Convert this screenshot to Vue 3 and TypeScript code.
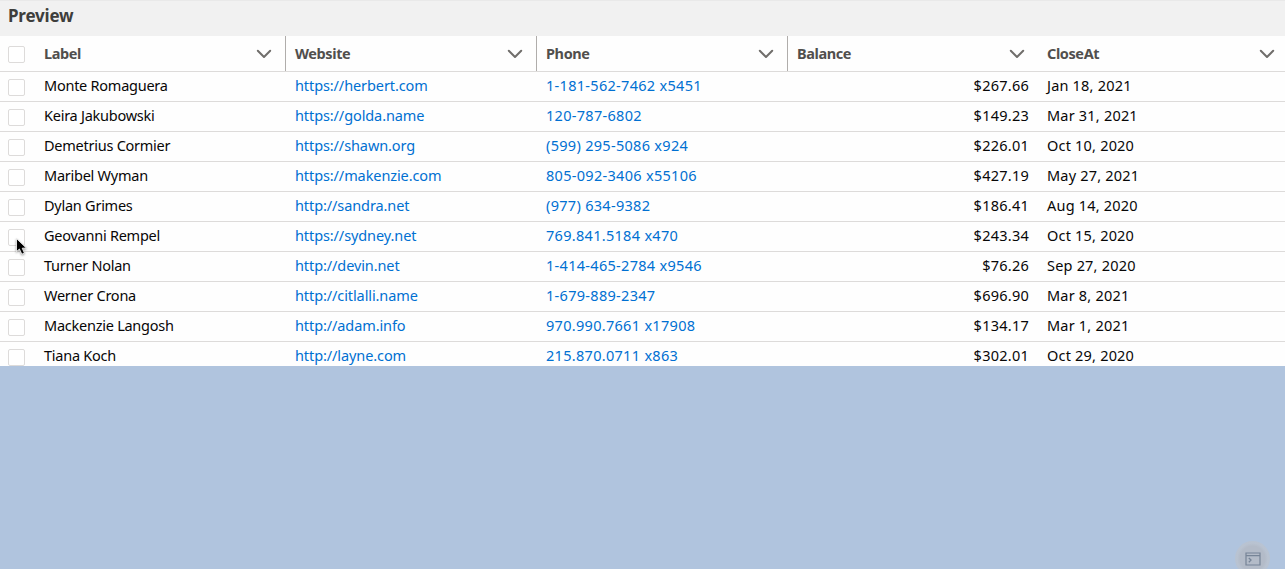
<script setup lang="ts">
interface Row {
  label: string
  website: string
  phone: string
  balance: string
  closeAt: string
}

const columns: string[] = ['Label', 'Website', 'Phone', 'Balance', 'CloseAt']

const rows: Row[] = [
  { label: 'Monte Romaguera', website: 'https://herbert.com', phone: '1-181-562-7462 x5451', balance: '$267.66', closeAt: 'Jan 18, 2021' },
  { label: 'Keira Jakubowski', website: 'https://golda.name', phone: '120-787-6802', balance: '$149.23', closeAt: 'Mar 31, 2021' },
  { label: 'Demetrius Cormier', website: 'https://shawn.org', phone: '(599) 295-5086 x924', balance: '$226.01', closeAt: 'Oct 10, 2020' },
  { label: 'Maribel Wyman', website: 'https://makenzie.com', phone: '805-092-3406 x55106', balance: '$427.19', closeAt: 'May 27, 2021' },
  { label: 'Dylan Grimes', website: 'http://sandra.net', phone: '(977) 634-9382', balance: '$186.41', closeAt: 'Aug 14, 2020' },
  { label: 'Geovanni Rempel', website: 'https://sydney.net', phone: '769.841.5184 x470', balance: '$243.34', closeAt: 'Oct 15, 2020' },
  { label: 'Turner Nolan', website: 'http://devin.net', phone: '1-414-465-2784 x9546', balance: '$76.26', closeAt: 'Sep 27, 2020' },
  { label: 'Werner Crona', website: 'http://citlalli.name', phone: '1-679-889-2347', balance: '$696.90', closeAt: 'Mar 8, 2021' },
  { label: 'Mackenzie Langosh', website: 'http://adam.info', phone: '970.990.7661 x17908', balance: '$134.17', closeAt: 'Mar 1, 2021' },
  { label: 'Tiana Koch', website: 'http://layne.com', phone: '215.870.0711 x863', balance: '$302.01', closeAt: 'Oct 29, 2020' },
]
</script>

<template>
  <div class="page">
    <h1 class="title">Preview</h1>
    <div class="table">
      <div class="row head">
        <div class="check"><span class="box"></span></div>
        <div v-for="(name, i) in columns" :key="name" class="cell" :class="{ divided: i < 3 }">
          <span>{{ name }}</span>
          <svg class="chevron" width="16" height="10" viewBox="0 0 16 10">
            <path d="M1.8 1.8 L8 8 L14.2 1.8" fill="none" stroke="#706e6b" stroke-width="2" stroke-linecap="round" stroke-linejoin="round" />
          </svg>
        </div>
      </div>
      <div v-for="row in rows" :key="row.label" class="row">
        <div class="check"><span class="box"></span></div>
        <div class="cell name">{{ row.label }}</div>
        <div class="cell web"><a class="link">{{ row.website }}</a></div>
        <div class="cell phone"><a class="link">{{ row.phone }}</a></div>
        <div class="cell balance">{{ row.balance }}</div>
        <div class="cell date">{{ row.closeAt }}</div>
      </div>
    </div>
    <svg class="pointer" width="15" height="20" viewBox="0 0 15 20">
      <path d="M1.5 0.6 L1.5 13.6 L4.4 11 L6.9 16.2 L9.4 15 L7.2 10.2 L11.3 10 Z" fill="#000" stroke="#fff" stroke-width="0.8" />
    </svg>
    <div class="console">
      <svg width="16" height="14" viewBox="0 0 16 14">
        <path d="M1 1 H15 V13 H1 Z M1 3.6 H15" fill="none" stroke="#768497" stroke-width="1.2" />
        <path d="M3.8 6 L6 8.1 L3.8 10.2" fill="none" stroke="#768497" stroke-width="1.3" />
      </svg>
    </div>
  </div>
</template>

<style>
body {
  margin: 0;
}
</style>

<style scoped>
.page {
  position: relative;
  width: 1285px;
  height: 569px;
  overflow: hidden;
  background: #b0c4de;
  font-family: "Noto Sans", "Open Sans", sans-serif;
  font-size: 14.5px;
  color: #080707;
}
.title {
  box-sizing: border-box;
  height: 36px;
  margin: 0;
  padding-left: 8px;
  background: #f1f1f1;
  border-top: 1px solid #e9e9e9;
  color: #3e3e3c;
  font-size: 17px;
  font-weight: 700;
  letter-spacing: -0.2px;
  line-height: 30px;
}
.table {
  height: 330px;
  overflow: hidden;
  background: #fefefe;
}
.row {
  display: grid;
  grid-template-columns: 35px 251px 251px 251px 250px 247px;
  box-sizing: border-box;
  height: 30px;
  border-bottom: 1px solid #dddbda;
}
.head {
  height: 36px;
  color: #514f4d;
  font-weight: 700;
  letter-spacing: -0.4px;
}
.check {
  padding: 7px 0 0 8px;
}
.head .check {
  padding-top: 10px;
}
.box {
  display: block;
  box-sizing: border-box;
  width: 17px;
  height: 17px;
  border: 1px solid #dddbda;
  border-radius: 2px;
  background: #fff;
}
.cell {
  box-sizing: border-box;
  padding: 0 9px;
  line-height: 27px;
  white-space: nowrap;
}
.head .cell {
  display: flex;
  align-items: center;
  justify-content: space-between;
  padding-right: 13px;
}
.head .cell:last-child {
  padding-right: 10px;
}
.head .divided {
  border-right: 1px solid #b0adab;
}
.link {
  color: #0070d2;
}
.name {
  letter-spacing: -0.25px;
}
.web {
  letter-spacing: -0.1px;
}
.phone {
  letter-spacing: 0.3px;
}
.balance {
  letter-spacing: 0.25px;
  text-align: right;
}
.date {
  letter-spacing: 0.2px;
}
.pointer {
  position: absolute;
  left: 15px;
  top: 238px;
  filter: drop-shadow(0 1px 1px rgba(0, 0, 0, 0.4));
}
.console {
  position: absolute;
  left: 1235px;
  top: 541px;
  display: flex;
  align-items: center;
  justify-content: center;
  width: 35px;
  height: 35px;
  border-radius: 50%;
  background: radial-gradient(circle, #b3bbc8 0 50%, #b9c3d1 62%, #b4c1d4 100%);
}
</style>
